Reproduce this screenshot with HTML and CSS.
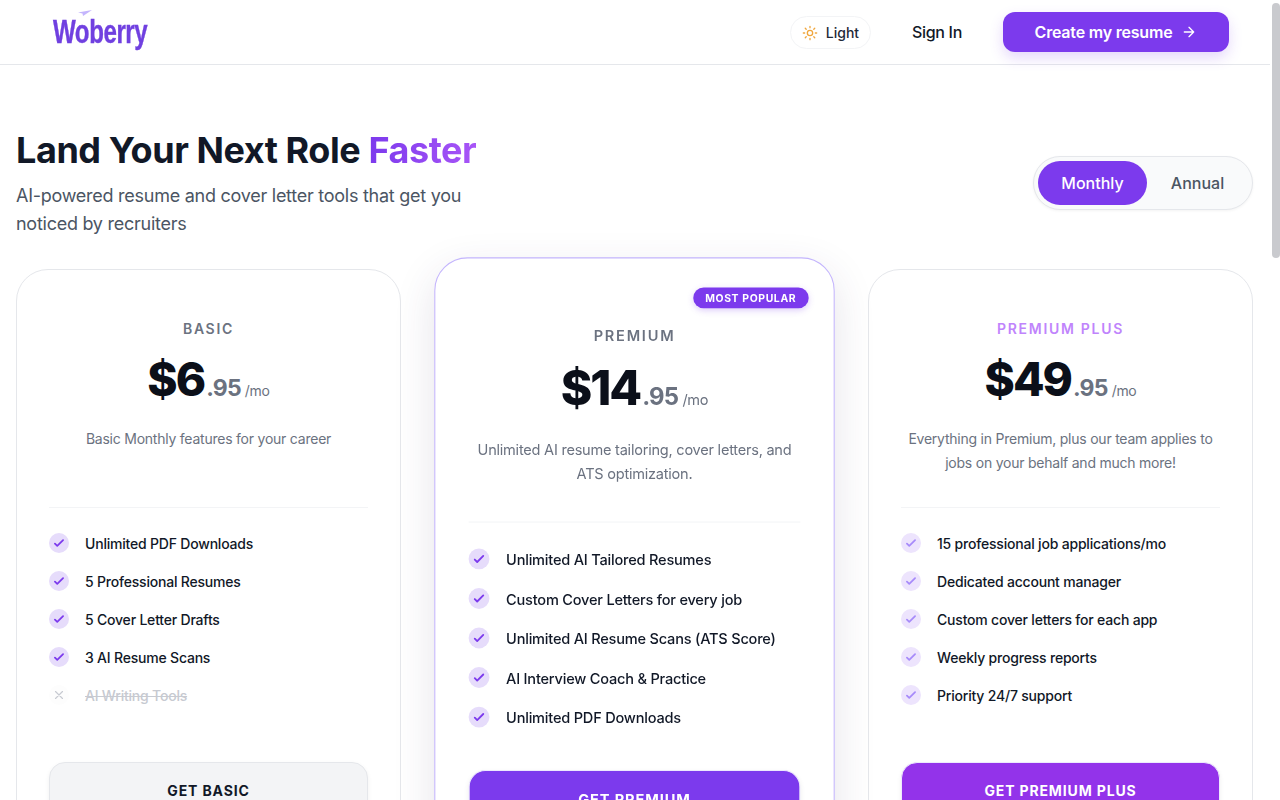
FILE: index.html
```html
<!DOCTYPE html>
<html lang="en">
<head>
  <meta charset="UTF-8" />
  <title>Pricing - Woberry</title>
  <meta name="viewport" content="width=device-width, initial-scale=1" />
  <link rel="stylesheet" href="styles.css">
</head>
<body>
  <header class="topbar">
    <a class="logo" href="#">
      <svg class="logo-plane" viewBox="0 0 14 6" width="14" height="6"><path d="M0 2.5 14 0 5 6 4.5 3.4Z" fill="#c4b5fd"/></svg>
      <span class="logo-text">Woberry</span>
    </a>
    <nav class="nav">
      <button class="theme-btn">
        <svg viewBox="0 0 24 24" width="16" height="16" fill="none" stroke="#f0a63c" stroke-width="2" stroke-linecap="round"><circle cx="12" cy="12" r="4"/><path d="M12 2v2M12 20v2M4.9 4.9l1.4 1.4M17.7 17.7l1.4 1.4M2 12h2M20 12h2M6.3 17.7l-1.4 1.4M19.1 4.9l-1.4 1.4"/></svg>
        Light
      </button>
      <a class="signin" href="#">Sign In</a>
      <a class="cta" href="#">
        Create my resume
        <svg viewBox="0 0 24 24" width="16" height="16" fill="none" stroke="currentColor" stroke-width="2" stroke-linecap="round" stroke-linejoin="round"><path d="M5 12h14M12 5l7 7-7 7"/></svg>
      </a>
    </nav>
  </header>

  <main class="page">
    <section class="hero">
      <div>
        <h1>Land Your Next Role <span class="accent">Faster</span></h1>
        <p class="lead">AI-powered resume and cover letter tools that get you noticed by recruiters</p>
      </div>
      <div class="toggle">
        <button class="toggle-item active">Monthly</button>
        <button class="toggle-item">Annual</button>
      </div>
    </section>

    <section class="plans">
      <article class="plan">
        <h3 class="plan-name">BASIC</h3>
        <div class="price"><b>$6</b><strong>.95</strong><span>/mo</span></div>
        <p class="plan-desc">Basic Monthly features for your career</p>
        <ul class="features">
          <li><i class="tick"><svg viewBox="0 0 24 24"><path d="M5 13l4 4L19 7"/></svg></i>Unlimited PDF Downloads</li>
          <li><i class="tick"><svg viewBox="0 0 24 24"><path d="M5 13l4 4L19 7"/></svg></i>5 Professional Resumes</li>
          <li><i class="tick"><svg viewBox="0 0 24 24"><path d="M5 13l4 4L19 7"/></svg></i>5 Cover Letter Drafts</li>
          <li><i class="tick"><svg viewBox="0 0 24 24"><path d="M5 13l4 4L19 7"/></svg></i>3 AI Resume Scans</li>
          <li class="off"><i class="tick"><svg viewBox="0 0 24 24"><path d="M6 6l12 12M18 6L6 18"/></svg></i><s>AI Writing Tools</s></li>
        </ul>
        <button class="plan-btn">GET BASIC</button>
      </article>

      <article class="plan popular">
        <span class="badge">MOST POPULAR</span>
        <h3 class="plan-name">PREMIUM</h3>
        <div class="price"><b>$14</b><strong>.95</strong><span>/mo</span></div>
        <p class="plan-desc">Unlimited AI resume tailoring, cover letters, and ATS optimization.</p>
        <ul class="features">
          <li><i class="tick"><svg viewBox="0 0 24 24"><path d="M5 13l4 4L19 7"/></svg></i>Unlimited AI Tailored Resumes</li>
          <li><i class="tick"><svg viewBox="0 0 24 24"><path d="M5 13l4 4L19 7"/></svg></i>Custom Cover Letters for every job</li>
          <li><i class="tick"><svg viewBox="0 0 24 24"><path d="M5 13l4 4L19 7"/></svg></i>Unlimited AI Resume Scans (ATS Score)</li>
          <li><i class="tick"><svg viewBox="0 0 24 24"><path d="M5 13l4 4L19 7"/></svg></i>AI Interview Coach &amp; Practice</li>
          <li><i class="tick"><svg viewBox="0 0 24 24"><path d="M5 13l4 4L19 7"/></svg></i>Unlimited PDF Downloads</li>
        </ul>
        <button class="plan-btn">GET PREMIUM</button>
      </article>

      <article class="plan plus">
        <h3 class="plan-name">PREMIUM PLUS</h3>
        <div class="price"><b>$49</b><strong>.95</strong><span>/mo</span></div>
        <p class="plan-desc">Everything in Premium, plus our team applies to jobs on your behalf and much more!</p>
        <ul class="features">
          <li><i class="tick"><svg viewBox="0 0 24 24"><path d="M5 13l4 4L19 7"/></svg></i>15 professional job applications/mo</li>
          <li><i class="tick"><svg viewBox="0 0 24 24"><path d="M5 13l4 4L19 7"/></svg></i>Dedicated account manager</li>
          <li><i class="tick"><svg viewBox="0 0 24 24"><path d="M5 13l4 4L19 7"/></svg></i>Custom cover letters for each app</li>
          <li><i class="tick"><svg viewBox="0 0 24 24"><path d="M5 13l4 4L19 7"/></svg></i>Weekly progress reports</li>
          <li><i class="tick"><svg viewBox="0 0 24 24"><path d="M5 13l4 4L19 7"/></svg></i>Priority 24/7 support</li>
        </ul>
        <button class="plan-btn">GET PREMIUM PLUS</button>
      </article>
    </section>
  </main>

  <div class="scroll-thumb"></div>
</body>
</html>
```

FILE: styles.css
```css
* { box-sizing: border-box; }
body { margin: 0; padding-right: 10px; background: #fff; color: #0b0f19; font-family: Inter, "Noto Sans", Arial, sans-serif; }
a { text-decoration: none; color: inherit; }
button { font-family: inherit; cursor: pointer; border: none; }
.scroll-thumb { position: fixed; top: 3px; right: 0; width: 8px; height: 255px; background: #c9cace; border-radius: 4px; }

/* top bar */
.topbar { height: 65px; display: flex; align-items: center; justify-content: space-between; padding: 0 41px 0 53px; border-bottom: 1px solid #e5e7eb; }
.logo { position: relative; display: block; width: 94px; margin-top: -1px; }
.logo-text { display: block; font-family: "Liberation Sans", sans-serif; font-weight: 700; font-size: 33px; line-height: 40px; letter-spacing: -0.6px; color: #7040e0; -webkit-text-stroke: 0.4px #7040e0; transform: scaleX(0.73); transform-origin: left center; white-space: nowrap; }
.logo-plane { position: absolute; top: -2px; left: 25px; }
.nav { display: flex; align-items: center; }
.theme-btn { display: flex; align-items: center; justify-content: center; gap: 8px; width: 81px; height: 33px; margin-top: 1px; padding: 0; background: #fff; border: 1px solid #f3f4f6; border-radius: 17px; font-size: 14px; font-weight: 500; color: #1f2937; }
.signin { margin-left: 41px; font-size: 16px; font-weight: 500; color: #111827; letter-spacing: -0.3px; }
.cta { margin-left: 41px; width: 226px; height: 40px; display: flex; align-items: center; justify-content: center; gap: 9px; background: #7c3aed; color: #fff; border-radius: 12px; font-size: 16px; font-weight: 600; letter-spacing: -0.2px; box-shadow: 0 6px 14px rgba(124, 58, 237, 0.2); }

/* heading */
.page { padding: 0 17px 0 16px; }
.hero { display: flex; justify-content: space-between; align-items: center; padding: 61px 0 31px; }
h1 { margin: 0; font-size: 36px; line-height: 48px; font-weight: 700; letter-spacing: -0.44px; color: #111827; }
.accent { background: linear-gradient(90deg, #7c3aed, #a855f7); -webkit-background-clip: text; background-clip: text; color: transparent; }
.lead { margin: 8px 0 0; width: 470px; font-size: 18px; line-height: 28px; color: #4b5563; letter-spacing: -0.26px; }
.toggle { display: flex; width: 220px; height: 54px; margin-top: 2px; padding: 4px; background: #f9fafb; border: 1px solid #e5e7eb; border-radius: 27px; box-shadow: 0 1px 3px rgba(0, 0, 0, 0.05); }
.toggle-item { height: 44px; width: 109px; border-radius: 22px; background: transparent; font-size: 16px; font-weight: 500; color: #4b5563; }
.toggle-item + .toggle-item { width: 101px; }
.toggle-item.active { background: #7c3aed; color: #fff; }

/* plans */
.plans { display: grid; grid-template-columns: repeat(3, 1fr); gap: 41px; }
.plan { position: relative; display: flex; flex-direction: column; padding: 48px 32px 32px; background: #fff; border: 1px solid #e5e7eb; border-radius: 32px; }
.plan-name { margin: 0; text-align: center; font-size: 14px; line-height: 22px; font-weight: 600; letter-spacing: 1.7px; color: #6b7280; }
.price { margin-top: 11px; height: 56px; display: flex; align-items: baseline; justify-content: center; }
.price b { font-size: 46px; line-height: 56px; font-weight: 800; letter-spacing: -2px; color: #0b0f19; }
.price strong { margin-left: 2px; font-size: 23px; font-weight: 700; color: #6b7280; letter-spacing: -0.8px; }
.price span { margin-left: 4px; font-size: 14px; color: #6b7280; letter-spacing: -0.3px; }
.plan-desc { margin: 20px 0 0; height: 81px; padding: 0 2px; text-align: center; font-size: 14px; line-height: 24px; color: #6b7280; letter-spacing: -0.23px; border-bottom: 1px solid #f3f4f6; }
.features { list-style: none; margin: 0 0 32px; padding: 16px 0 0; }
.features li { display: flex; align-items: center; gap: 16px; height: 38px; font-size: 14px; font-weight: 500; color: #111827; letter-spacing: -0.2px; white-space: nowrap; }
.tick { flex: none; width: 20px; height: 20px; border-radius: 50%; background: #e6dcfb; display: flex; align-items: center; justify-content: center; }
.tick svg { width: 14px; height: 14px; fill: none; stroke: #7c3aed; stroke-width: 3; stroke-linecap: round; stroke-linejoin: round; }
.off { color: #c7cad1 !important; font-weight: 400; }
.off .tick { background: #fdfdfd; }
.off .tick svg { width: 14px; height: 14px; stroke: #c7cad1; stroke-width: 2; }
.plan-btn { margin-top: auto; height: 56px; width: 100%; border-radius: 16px; background: #f3f4f6; border: 1px solid #e5e7eb; font-size: 14px; font-weight: 700; letter-spacing: 0.85px; color: #111827; box-shadow: 0 2px 5px rgba(0, 0, 0, 0.06); }

.popular { z-index: 1; transform: scale(1.04); padding-top: 64px; border-color: #c4b5fd; box-shadow: 0 14px 40px rgba(60, 50, 90, 0.13); }
.popular .plan-name { margin: -1px 0 0; }
.popular .plan-desc { padding-top: 0; line-height: 23px; height: 82px; }
.popular .plan-btn { background: #7c3aed; border-color: #ede9fe; color: #fff; }
.badge { position: absolute; top: 28px; right: 24px; height: 20px; padding: 0 12px; display: flex; align-items: center; border-radius: 10px; background: #7c3aed; color: #fff; font-size: 10px; font-weight: 700; letter-spacing: 0.6px; box-shadow: 0 2px 6px rgba(124, 58, 237, 0.25); }

.plus .plan-name { color: #c084fc; }
.plus .tick { background: #ede4fd; }
.plus .tick svg { stroke: #a78bfa; }
.plus .plan-btn { background: #9333ea; border-color: #ede9fe; color: #fff; }
```
